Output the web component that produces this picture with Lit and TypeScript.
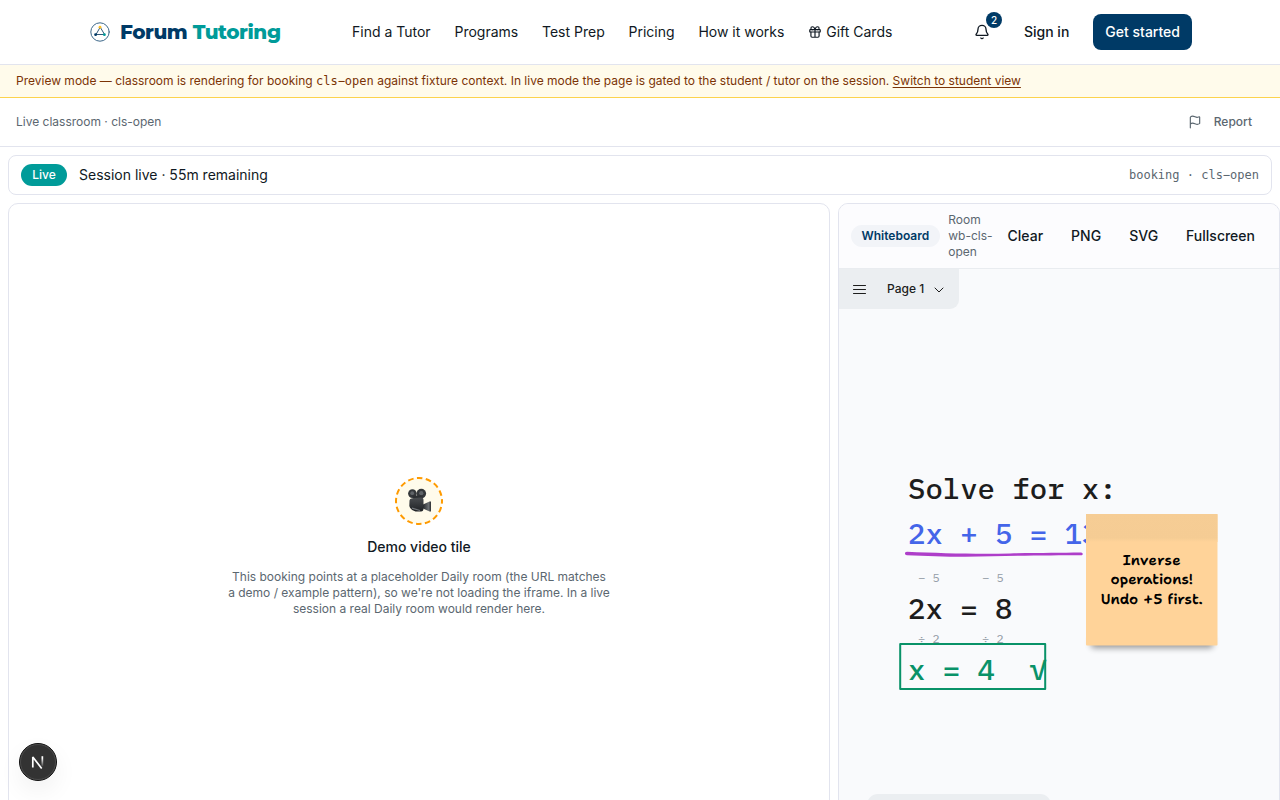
import { LitElement, html, css, svg } from "lit";
import { customElement } from "lit/decorators.js";

@customElement("site-header")
class SiteHeader extends LitElement {
  static styles = css`
    :host { display: block; height: 64px; flex: none; border-bottom: 1px solid #e2e4ee; background: #fff; }
    .inner { height: 64px; padding: 0 88px; display: flex; align-items: center; }
    .brand { display: flex; align-items: center; gap: 8px; width: 264px; }
    .mark { display: block; width: 24px; height: 24px; stroke-width: 1; }
    .name { font: 800 20px/28px Montserrat, Inter, sans-serif; letter-spacing: -0.45px; color: #003a66; white-space: nowrap; }
    .name span { color: #009b99; }
    nav { display: flex; gap: 23.8px; align-items: center; white-space: nowrap; }
    nav span { display: flex; align-items: center; gap: 4px; }
    .right { margin-left: auto; display: flex; align-items: center; font-weight: 500; white-space: nowrap; }
    .bell { position: relative; width: 36px; height: 36px; display: grid; place-items: center; }
    .badge { position: absolute; left: 22px; top: -2px; width: 16px; height: 16px; border-radius: 50%; background: #003a66; color: #fff; font: 500 10px/16px Inter, sans-serif; text-align: center; }
    .sign { padding: 0 24px; }
    .cta { background: #003a66; color: #fff; height: 36px; line-height: 36px; padding: 0 12px; border-radius: 8px; }
    svg { display: block; fill: none; stroke: currentColor; stroke-width: 2; stroke-linecap: round; stroke-linejoin: round; }
  `;
  render() {
    return html`<div class="inner">
      <div class="brand">
        <svg class="mark" viewBox="0 0 24 24">
          <circle cx="12" cy="12" r="9.2" stroke="#3d688a" stroke-width="1" />
          <path d="M12 7.500 8 14.500h8.200z" stroke="#33597a" stroke-width="1" />
          <circle cx="12" cy="7.200" r="1.400" fill="#fbbf24" stroke="none" />
          <circle cx="7.600" cy="14.700" r="1.400" fill="#003a66" stroke="none" />
          <circle cx="16.400" cy="14.700" r="1.400" fill="#009b99" stroke="none" />
        </svg>
        <div class="name">Forum <span>Tutoring</span></div>
      </div>
      <nav>
        ${["Find a Tutor", "Programs", "Test Prep", "Pricing", "How it works"].map((t) => html`<span>${t}</span>`)}
        <span><svg width="14" height="14" viewBox="0 0 24 24"><rect x="3" y="8" width="18" height="4" rx="1" /><path d="M12 8v13M19 12v7a2 2 0 0 1-2 2H7a2 2 0 0 1-2-2v-7M7.5 8a2.5 2.5 0 0 1 0-5A4.8 8 0 0 1 12 8a4.8 8 0 0 1 4.5-5 2.5 2.5 0 0 1 0 5" /></svg>Gift Cards</span>
      </nav>
      <div class="right">
        <div class="bell">
          <svg width="16" height="16" viewBox="0 0 24 24"><path d="M10.268 21a2 2 0 0 0 3.464 0M3.262 15.326A1 1 0 0 0 4 17h16a1 1 0 0 0 .74-1.673C19.41 13.956 18 12.499 18 8A6 6 0 0 0 6 8c0 4.499-1.411 5.956-2.738 7.326" /></svg>
          <span class="badge">2</span>
        </div>
        <span class="sign">Sign in</span>
        <span class="cta">Get started</span>
      </div>
    </div>`;
  }
}

@customElement("video-tile")
class VideoTile extends LitElement {
  static styles = css`
    :host { display: flex; flex-direction: column; align-items: center; border: 1px solid #e2e4ee; border-radius: 10px; background: #fff; box-sizing: border-box; padding-top: 273px; text-align: center; }
    .icon { width: 48px; height: 48px; display: block; }
    h2 { margin: 12px 0 0; font: 500 14px/20px Inter, sans-serif; }
    p { margin: 12px 0 0; width: 384px; font-size: 12px; line-height: 16px; color: #5b6770; }
  `;
  render() {
    return html`<svg class="icon" viewBox="0 0 48 48">
        <defs>
          <linearGradient id="body" x1="0" y1="0" x2="0" y2="1"><stop offset="0" stop-color="#4a4d50" /><stop offset="1" stop-color="#1f2225" /></linearGradient>
          <linearGradient id="horn" x1="0" y1="0" x2="1" y2="0"><stop offset="0" stop-color="#26292c" /><stop offset=".7" stop-color="#6d7174" /><stop offset="1" stop-color="#2b2e31" /></linearGradient>
        </defs>
        <circle cx="24" cy="24" r="23" fill="#fffbeb" stroke="#fe9a00" stroke-width="2" stroke-dasharray="5.6 3.43" stroke-dashoffset="2.8" />
        <circle cx="17.400" cy="16.600" r="4.300" fill="#34373a" />
        <circle cx="26.300" cy="16.600" r="4.800" fill="#34373a" />
        <circle cx="17.200" cy="16.200" r="1.900" fill="#606468" />
        <circle cx="26.300" cy="16.200" r="2.100" fill="#606468" />
        <path d="M17.500 18.500h10v4h-9z" fill="#2c2f32" />
        <path d="M14.500 23.500Q14.500 21.500 17 21.300L26 20.500Q28.500 20.500 28.500 23V31.500Q28.500 34.500 26 34.500H20.500Q14.800 32.500 14.300 29Z" fill="url(#body)" />
        <path d="M17 31.200 25 33.500" stroke="#75797d" stroke-width="1.200" />
        <path d="M28 27.500 34.500 24.500H36V34.500H34.500L28 31.500Z" fill="url(#horn)" />
      </svg>
      <h2>Demo video tile</h2>
      <p>This booking points at a placeholder Daily room (the URL matches a demo / example pattern), so we're not loading the iframe. In a live session a real Daily room would render here.</p>`;
  }
}

@customElement("white-board")
class WhiteBoard extends LitElement {
  static styles = css`
    :host { display: flex; flex-direction: column; border: 1px solid #e2e4ee; border-radius: 10px; overflow: hidden; box-sizing: border-box; background: #f9fafc; }
    .bar { flex: none; height: 64px; box-sizing: content-box; border-bottom: 1px solid #e9ecf0; background: #fcfcfe; display: flex; align-items: center; padding: 0 24px 0 12px; white-space: nowrap; }
    .chip { height: 22px; line-height: 22px; padding: 0 11px 0 10.5px; border-radius: 11px; background: #f2f4f8; color: #003a66; font-size: 12px; font-weight: 600; }
    .room { width: 45px; margin: 0 14.5px 0 8px; font-size: 12px; line-height: 16px; color: #5b6770; }
    .acts { display: flex; gap: 28px; font-weight: 500; }
    .canvas { position: relative; flex: 1; }
    .menu { width: 120px; height: 40px; border-bottom-right-radius: 9px; background: #ebeef1; display: flex; align-items: center; color: #1d1d1d; font-size: 12px; font-weight: 500; }
    .menu svg { display: block; fill: none; stroke: #1d1d1d; stroke-width: 1; stroke-linecap: round; stroke-linejoin: round; }
    .burger { margin: 1px 20px 0 13px; }
    .chev { margin: 2px 0 0 9px; }
    .draw { position: absolute; left: 0; top: -1px; width: 440px; height: 532px; }
    .mono { font-family: "IBM Plex Mono", "Liberation Mono", monospace; font-size: 29px; font-weight: 500; white-space: pre; }
    .small { font-size: 12px; font-weight: 400; fill: #949ca6; }
    .hand { font: 600 14.3px "Shantell Sans", "Comic Neue", Lato, sans-serif; text-anchor: middle; fill: #000; text-rendering: geometricPrecision; }
    .tools { position: absolute; left: 28px; top: 525px; width: 184px; height: 48px; border-radius: 11px; background: #ebeef1; }
  `;
  render() {
    const line = (x: number, y: number, w: number, fill: string, t: string) =>
      svg`<text class="mono" x=${x} y=${y} textLength=${w} fill=${fill}>${t}</text>`;
    const step = (x: number, y: number, t: string) => svg`<text class="mono small" x=${x} y=${y} textLength="21.6">${t}</text>`;
    const note = (y: number, w: number, t: string) => svg`<text class="hand" x="1151.7" y=${y} textLength=${w}>${t}</text>`;
    return html`<div class="bar">
        <span class="chip">Whiteboard</span>
        <span class="room">Room<br />wb-cls-<br />open</span>
        <div class="acts"><span>Clear</span><span>PNG</span><span>SVG</span><span>Fullscreen</span></div>
      </div>
      <div class="canvas">
        <div class="menu">
          <svg class="burger" width="15" height="12" viewBox="0 0 15 12"><path d="M1.5 1.5h12M1.5 5.5h12M1.5 9.5h12" /></svg>
          <span>Page 1</span>
          <svg class="chev" width="12" height="8" viewBox="0 0 12 8"><path d="M2 2l4 4 4-4" /></svg>
        </div>
        <svg class="draw" viewBox="839 268 440 532">
          <defs>
            <linearGradient id="fold" x1="0" y1="0" x2="0" y2="1"><stop offset="0" stop-color="#f6cd95" /><stop offset=".85" stop-color="#f5cc94" /><stop offset="1" stop-color="#ffd399" /></linearGradient>
            <filter id="blur" x="-10%" y="-80%" width="120%" height="300%"><feGaussianBlur stdDeviation="3.2" /></filter>
          </defs>
          ${line(908, 499, 208.6, "#1d1d1d", "Solve for x:")}
          ${line(908, 544, 191.2, "#4465e9", "2x + 5 = 13")}
          <path d="M907 551.700C940 553 970 554.200 1010 553.500C1040 552.800 1060 553 1081 552.600C1083.300 552.800 1083.300 555.200 1081 555.300C1050 555.300 1010 555.800 965 556.800C945 556.800 925 555.800 907 555.200C904.300 555 904.300 551.800 907 551.700Z" fill="#ae3ec9" />
          ${step(918, 582, "− 5")}${step(982, 582, "− 5")}
          ${line(908, 619, 104.3, "#1d1d1d", "2x = 8")}
          ${step(918, 643, "÷ 2")}${step(982, 643, "÷ 2")}
          ${line(908, 680, 139, "#099268", "x = 4  √")}
          <rect x="900.2" y="644" width="145" height="45" fill="none" stroke="#099268" stroke-width="2" stroke-linejoin="round" />
          <rect x="1091" y="638" width="122" height="10" rx="3" fill="#000" opacity=".4" filter="url(#blur)" />
          <rect x="1086" y="514" width="131.500" height="131.500" rx="1" fill="#ffd399" />
          <rect x="1086" y="514" width="131.500" height="28" fill="url(#fold)" />
          ${note(565, 58, "Inverse")}${note(584.3, 82.5, "operations!")}${note(603.8, 102, "Undo +5 first.")}
        </svg>
        <div class="tools"></div>
      </div>`;
  }
}

@customElement("app-root")
class AppRoot extends LitElement {
  static styles = css`
    :host { display: flex; flex-direction: column; width: 1280px; height: 800px; overflow: hidden; position: relative; background: #fff; color: #101923; font: 14px/20px Inter, sans-serif; }
    .banner { flex: none; height: 32px; line-height: 32px; padding: 0 16px; border-bottom: 1px solid #fcd34d; background: #fffbeb; color: #7b3306; font-size: 12px; white-space: nowrap; }
    .mono { font-family: "DejaVu Sans Mono", monospace; font-size: 12px; }
    .banner u { text-underline-offset: 2px; }
    .sub { flex: none; height: 48px; border-bottom: 1px solid #e2e4ee; padding: 0 28px 0 16px; display: flex; align-items: center; justify-content: space-between; font-size: 12px; color: #5b6770; }
    .report { display: flex; align-items: center; gap: 12px; font-weight: 500; }
    .report svg { display: block; fill: none; stroke: currentColor; stroke-width: 2; stroke-linecap: round; stroke-linejoin: round; }
    .status { flex: none; box-sizing: border-box; height: 40px; margin: 8px; border: 1px solid #e2e4ee; border-radius: 8px; padding: 0 12px; display: flex; align-items: center; gap: 12px; }
    .live { height: 22px; line-height: 22px; width: 46px; text-align: center; border-radius: 11px; background: #009b99; color: #fff; font-size: 12px; font-weight: 500; }
    .booking { margin-left: auto; color: #5b6770; }
    .panes { flex: none; display: grid; grid-template-columns: 822px 442px; gap: 8px; padding-left: 8px; height: 640px; }
    .dev { position: absolute; left: 19px; top: 743px; width: 38px; height: 38px; border-radius: 50%; box-shadow: 0 10px 24px rgba(0, 0, 0, 0.06); }
    .dev svg { display: block; }
  `;
  render() {
    return html`<site-header></site-header>
      <div class="banner">Preview mode — classroom is rendering for booking <span class="mono">cls−open</span> against fixture context. In live mode the page is gated to the student / tutor on the session. <u>Switch to student view</u></div>
      <div class="sub">
        <span>Live classroom · cls-open</span>
        <span class="report"><svg width="14" height="14" viewBox="0 0 24 24"><path d="M4 22V4a1 1 0 0 1 .4-.8A6 6 0 0 1 8 2c3 0 5 2 7.333 2q2 0 3.067-.8A1 1 0 0 1 20 4v10a1 1 0 0 1-.4.8A6 6 0 0 1 16 16c-3 0-5-2-8-2a6 6 0 0 0-4 1.528" /></svg>Report</span>
      </div>
      <div class="status"><span class="live">Live</span><span>Session live · 55m remaining</span><span class="mono booking">booking · cls−open</span></div>
      <div class="panes"><video-tile></video-tile><white-board></white-board></div>
      <div class="dev">
        <svg width="38" height="38" viewBox="0 0 38 38">
          <defs><linearGradient id="n" x1="0" y1="0" x2="0" y2="1"><stop offset="0.2" stop-color="#fff" /><stop offset="1" stop-color="#fff" stop-opacity="0.1" /></linearGradient></defs>
          <circle cx="19" cy="19" r="18.500" fill="#333" stroke="#111" />
          <circle cx="19" cy="19" r="17.500" fill="none" stroke="#4b4b4b" />
          <path d="M13.800 24.500V14L22.700 25.400" fill="none" stroke="#fff" stroke-width="1.700" stroke-linejoin="bevel" />
          <rect x="22.500" y="13.200" width="1.700" height="10" fill="url(#n)" />
        </svg>
      </div>`;
  }
}
